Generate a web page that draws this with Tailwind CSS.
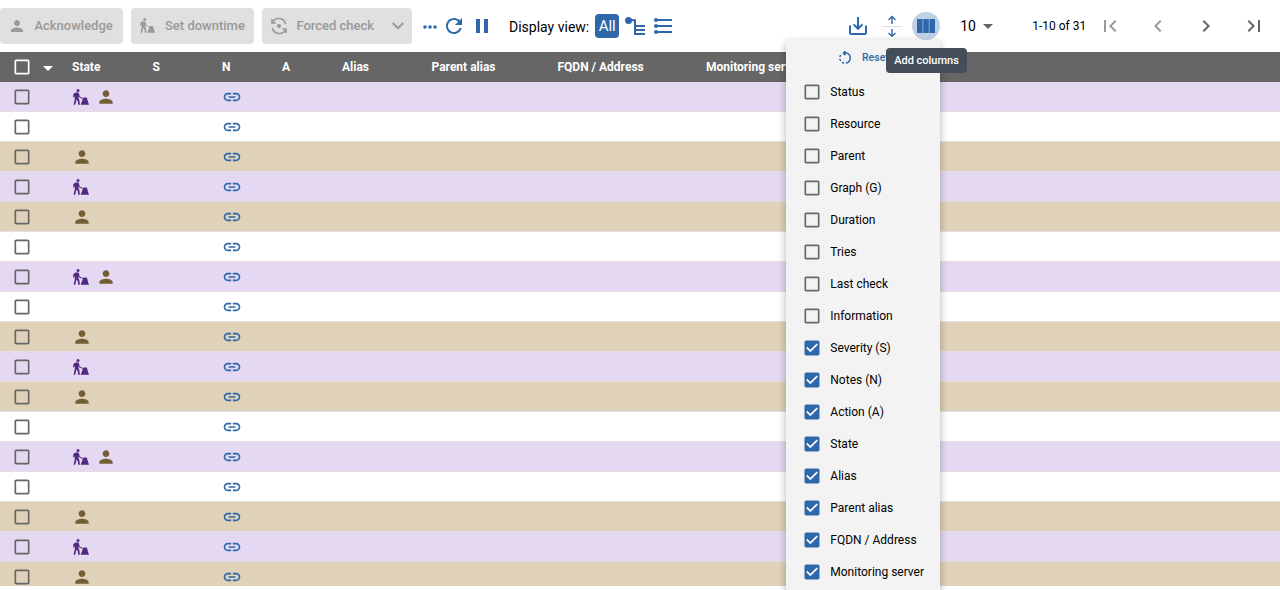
<!DOCTYPE html>
<html lang="en">
<head>
<meta charset="utf-8">
<title>Resources status</title>
<script src="https://cdn.jsdelivr.net/npm/@tailwindcss/browser@4"></script>
</head>
<body class="bg-white font-[Roboto,sans-serif] text-black">
<svg class="hidden">
  <symbol id="person" viewBox="0 0 24 24"><path d="M12 12c2.21 0 4-1.79 4-4s-1.79-4-4-4-4 1.79-4 4 1.79 4 4 4zm0 2c-2.67 0-8 1.34-8 4v2h16v-2c0-2.66-5.33-4-8-4z"/></symbol>
  <symbol id="worker" viewBox="0 0 16 16"><circle cx="5" cy="1.600" r="1.500"/><path d="M2.300 3.500H5.200L6 4.500 6.600 7.600 9.800 8.900 9.500 9.700 6.300 8.600 5.500 7.600 5.400 8.900 6.300 11 6.900 15.700H5.200L4.700 12 3.400 10.300 3.100 12.200 2.200 15.700H.6L1.600 11 2 7.900 1.500 6.500 1.500 8.600H.2L.3 5.200z"/><path d="M9.900 9.200 10.500 8.600H13.500L14.200 9.500 14.600 11.400 16 15.700H7.600L9.300 11.600z"/></symbol>
  <symbol id="link" viewBox="0 0 24 24"><path d="M3.9 12c0-1.71 1.39-3.1 3.1-3.1h4V7H7c-2.76 0-5 2.24-5 5s2.24 5 5 5h4v-1.9H7c-1.71 0-3.1-1.39-3.1-3.1zM8 13h8v-2H8v2zm9-6h-4v1.9h4c1.71 0 3.1 1.39 3.1 3.1s-1.39 3.1-3.1 3.1h-4V17h4c2.76 0 5-2.24 5-5s-2.24-5-5-5z"/></symbol>
  <symbol id="box" viewBox="0 0 24 24"><path d="M19 5v14H5V5h14m0-2H5c-1.1 0-2 .9-2 2v14c0 1.1.9 2 2 2h14c1.1 0 2-.9 2-2V5c0-1.1-.9-2-2-2z"/></symbol>
  <symbol id="checked" viewBox="0 0 24 24"><path fill="#fff" d="M5 5h14v14H5z"/><path d="M19 3H5c-1.11 0-2 .9-2 2v14c0 1.1.89 2 2 2h14c1.11 0 2-.9 2-2V5c0-1.1-.89-2-2-2zm-9 14l-5-5 1.41-1.41L10 14.17l7.59-7.59L19 8l-9 9z"/></symbol>
  <symbol id="caret" viewBox="0 0 24 24"><path d="M7 10l5 5 5-5z"/></symbol>
</svg>
<div class="relative h-[590px] w-[1280px] overflow-hidden">
  <header class="flex h-[52px] items-center">
    <div class="flex gap-2 text-[13px] font-medium text-[#999]">
      <button class="flex h-9 w-[123px] items-center rounded bg-[#e0e0e0] pl-2"><svg class="size-[18px] fill-current"><use href="#person"/></svg><span class="ml-[8.4px]">Acknowledge</span></button>
      <button class="flex h-9 w-[123px] items-center rounded bg-[#e0e0e0] pl-2"><svg class="ml-px mr-[2px] size-[15px] -translate-y-px fill-current"><use href="#worker"/></svg><span class="ml-2">Set downtime</span></button>
      <button class="flex h-9 w-[150px] items-center rounded bg-[#e0e0e0] pl-2">
        <svg class="size-[18px]" viewBox="0 0 18 18" fill="none" stroke="currentColor" stroke-width="1.6"><path d="M2 2v4h4M2.300 5.800A7 7 0 0 1 15.600 7M16 16v-4h-4M15.700 12.200A7 7 0 0 1 2.400 11"/><circle cx="9" cy="9" r="2" fill="currentColor" stroke="none"/></svg>
        <span class="ml-[8.4px] w-[84px] text-left">Forced check</span>
        <svg class="ml-[11.6px] h-[8px] w-[12px]" viewBox="0 0 12 8" fill="none" stroke="currentColor" stroke-width="2"><path d="M.8 1 6 6.200 11.200 1"/></svg>
      </button>
    </div>
    <div class="flex items-center fill-[#2e68aa]">
      <svg class="ml-[11px] h-4 w-[14px] translate-y-[1px]" viewBox="0 0 14 16"><circle cx="2" cy="8" r="1.8"/><circle cx="7" cy="8" r="1.8"/><circle cx="12" cy="8" r="1.8"/></svg>
      <svg class="ml-[5px] size-6" viewBox="0 0 24 24"><path d="M17.65 6.35C16.2 4.9 14.21 4 12 4c-4.42 0-7.99 3.58-7.99 8s3.57 8 7.99 8c3.73 0 6.84-2.55 7.73-6h-2.08c-.82 2.33-3.04 4-5.65 4-3.31 0-6-2.69-6-6s2.69-6 6-6c1.66 0 3.14.69 4.22 1.78L13 11h7V4l-2.35 2.35z"/></svg>
      <svg class="ml-[4px] size-6" viewBox="0 0 24 24"><path d="M6 19h4V5H6v14zm8-14v14h4V5h-4z"/></svg>
    </div>
    <div class="ml-[15px] flex items-center">
      <span class="translate-y-px text-[14px]">Display view:</span>
      <span class="ml-[6px] flex size-6 items-center justify-center rounded bg-[#2e68aa] text-[15px] text-white">All</span>
      <svg class="ml-[6px] h-[18px] w-[20px]" viewBox="0 0 20 18" fill="none" stroke="#2e68aa" stroke-width="2"><circle cx="3.500" cy="3.500" r="3.500" fill="#2e68aa" stroke="none"/><path d="M3.500 3.300H10V17H20M10 9h10M10 13h10"/></svg>
      <svg class="ml-[9px] h-[16px] w-[18px]" viewBox="0 0 18 16" fill="#2e68aa"><path d="M2 1h16v2H2zM2 7h16v2H2zM2 13h16v2H2z"/><circle cx="2" cy="2" r="2"/><circle cx="2" cy="8" r="2"/><circle cx="2" cy="14" r="2"/></svg>
    </div>
    <div class="ml-[176px] flex items-center">
      <svg class="h-[20px] w-[20px]" viewBox="0 0 20 20" fill="none" stroke="#2e68aa" stroke-width="2"><path d="M2 9.500v7.300c0 .7.5 1.200 1.200 1.200h13.600c.7 0 1.200-.5 1.200-1.200V9.500M10 1v11.500M5.600 8.400 10 12.800l4.400-4.400"/></svg>
      <svg class="ml-[14px] h-[22px] w-[20px]" viewBox="0 0 20 22" fill="none" stroke="#2e68aa" stroke-width="1.400"><path stroke="#ddd" stroke-width="1" d="M0 11.500h20"/><path d="M10 9V2M6.500 5 10 1.500 13.500 5M10 14v7M6.500 18 10 21.300 13.500 18"/></svg>
      <span class="ml-[10px] flex size-7 items-center justify-center rounded-full bg-[#c0d1e6]"><svg class="h-[14px] w-[18px]" viewBox="0 0 18 14" fill="#2e68aa"><path d="M0 0h5.600v14H0zM6.200 0h5.600v14H6.200zM12.400 0H18v14h-5.600z"/></svg></span>
    </div>
    <div class="ml-[20px] flex items-center text-[14px]"><span class="w-[16px]">10</span><svg class="size-6 fill-[#666]"><use href="#caret"/></svg></div>
    <span class="ml-[32px] w-[54px] whitespace-nowrap text-[12px]">1-10 of 31</span>
    <div class="ml-[12px] flex items-center gap-6 text-[#666]">
      <svg class="size-6 fill-[#999]" viewBox="0 0 24 24"><path d="M18.410 16.590L13.820 12l4.590-4.590L17 6l-6 6 6 6zM6 6h2v12H6z"/></svg>
      <svg class="size-6 fill-[#999]" viewBox="0 0 24 24"><path d="M15.410 7.410L14 6l-6 6 6 6 1.410-1.410L10.830 12z"/></svg>
      <svg class="size-6 fill-current" viewBox="0 0 24 24"><path d="M10 6L8.590 7.410 13.170 12l-4.580 4.590L10 18l6-6z"/></svg>
      <svg class="size-6 fill-current" viewBox="0 0 24 24"><path d="M5.590 7.410L10.180 12l-4.590 4.590L7 18l6-6-6-6zM16 6h2v12h-2z"/></svg>
    </div>
  </header>
  <main class="h-[534px] overflow-hidden">
    <div class="grid h-[30px] grid-cols-[36px_36px_80.500px_69.500px_60px_60px_89.500px_126px_148.500px_1fr] items-center bg-[#666] text-[12px] font-bold whitespace-nowrap text-white">
      <svg class="ml-3 size-5 fill-current"><use href="#box"/></svg>
      <svg class="size-6 translate-y-px fill-current"><use href="#caret"/></svg>
      <span>State</span><span>S</span><span>N</span><span>A</span><span>Alias</span><span>Parent alias</span><span>FQDN / Address</span><span>Monitoring server</span>
    </div>
    <div id="rows"></div>
  </main>
  <aside class="absolute top-[40px] left-[786px] h-[570px] w-[154px] bg-[#f3f3f3] shadow-[0_3px_8px_rgba(0,0,0,0.3)]">
    <div class="flex h-[36px] items-center pl-[50px] text-[10.5px] font-medium text-[#2e68aa]">
      <svg class="size-[18px] fill-current" viewBox="0 0 24 24"><path d="M6.560 7.980C6.100 7.520 5.310 7.600 5 8.170c-.28.51-.5 1.030-.67 1.580-.19.630.31 1.250.96 1.250h.01c.43 0 .82-.28.94-.7.12-.4.280-.790.480-1.170.22-.370.150-.840-.16-1.150zM5.310 13h-.02c-.65 0-1.150.620-.96 1.250.16.540.38 1.070.66 1.580.31.570 1.110.660 1.570.200.300-.310.380-.770.170-1.150-.2-.370-.360-.760-.480-1.160-.12-.44-.51-.72-.94-.72zm2.850 6.020c.510.280 1.040.500 1.590.660.620.180 1.240-.320 1.240-.960v-.03c0-.43-.28-.82-.7-.94-.4-.12-.78-.28-1.150-.48-.38-.21-.86-.14-1.160.17-.47.470-.39 1.270.18 1.580zM13 4.070v-.660c0-.890-1.080-1.340-1.710-.710L9.170 4.830c-.4.400-.4 1.040 0 1.430l2.130 2.080c.63.620 1.700.170 1.700-.720V6.090c2.840.480 5 2.940 5 5.910 0 2.730-1.820 5.020-4.320 5.750-.41.120-.68.510-.68.940v.020c0 .650.610 1.140 1.230.960C17.570 18.710 20 15.640 20 12c0-4.080-3.050-7.440-7-7.930z"/></svg>
      <span class="ml-[8px]">Reset</span>
    </div>
    <div id="columns"></div>
  </aside>
  <div class="absolute top-[48px] left-[886px] flex h-[25px] w-[81px] items-center justify-center rounded bg-[#434e5a] pb-px text-[11px] font-medium whitespace-nowrap text-white"><span class="translate-y-px">Add columns</span></div>
</div>
<script>
const worker = '<svg class="mr-[7px] size-4 ml-px fill-[#512980]"><use href="#worker"/></svg>';
const person = '<svg class="size-5 fill-[#745f35]"><use href="#person"/></svg>';
const kinds = {
  b: ['bg-[#e5d8f3]', worker + person],
  n: ['bg-white', ''],
  a: ['bg-[#dfd2b9]', person],
  d: ['bg-[#e5d8f3]', worker]
};
document.getElementById('rows').innerHTML = [...'bnadanbnadanbnada'].map(k => `
  <div class="grid h-[30px] grid-cols-[72px_150px_1fr] items-center border-b border-[#e4e0e0] ${kinds[k][0]}">
    <svg class="ml-3 size-5 fill-[#666]"><use href="#box"/></svg>
    <div class="flex items-center">${kinds[k][1]}</div>
    <svg class="size-5 fill-[#2e68aa]"><use href="#link"/></svg>
  </div>`).join('');
const columns = ['Status','Resource','Parent','Graph (G)','Duration','Tries','Last check','Information','Severity (S)','Notes (N)','Action (A)','State','Alias','Parent alias','FQDN / Address','Monitoring server'];
document.getElementById('columns').innerHTML = columns.map((c, i) => `
  <label class="flex h-8 items-center pl-4 text-[12px] whitespace-nowrap">
    ${i < 8 ? '<svg class="size-5 fill-[#666]"><use href="#box"/></svg>' : '<svg class="size-5 fill-[#2e68aa]"><use href="#checked"/></svg>'}
    <span class="ml-[8.3px]">${c}</span>
  </label>`).join('');
</script>
</body>
</html>
